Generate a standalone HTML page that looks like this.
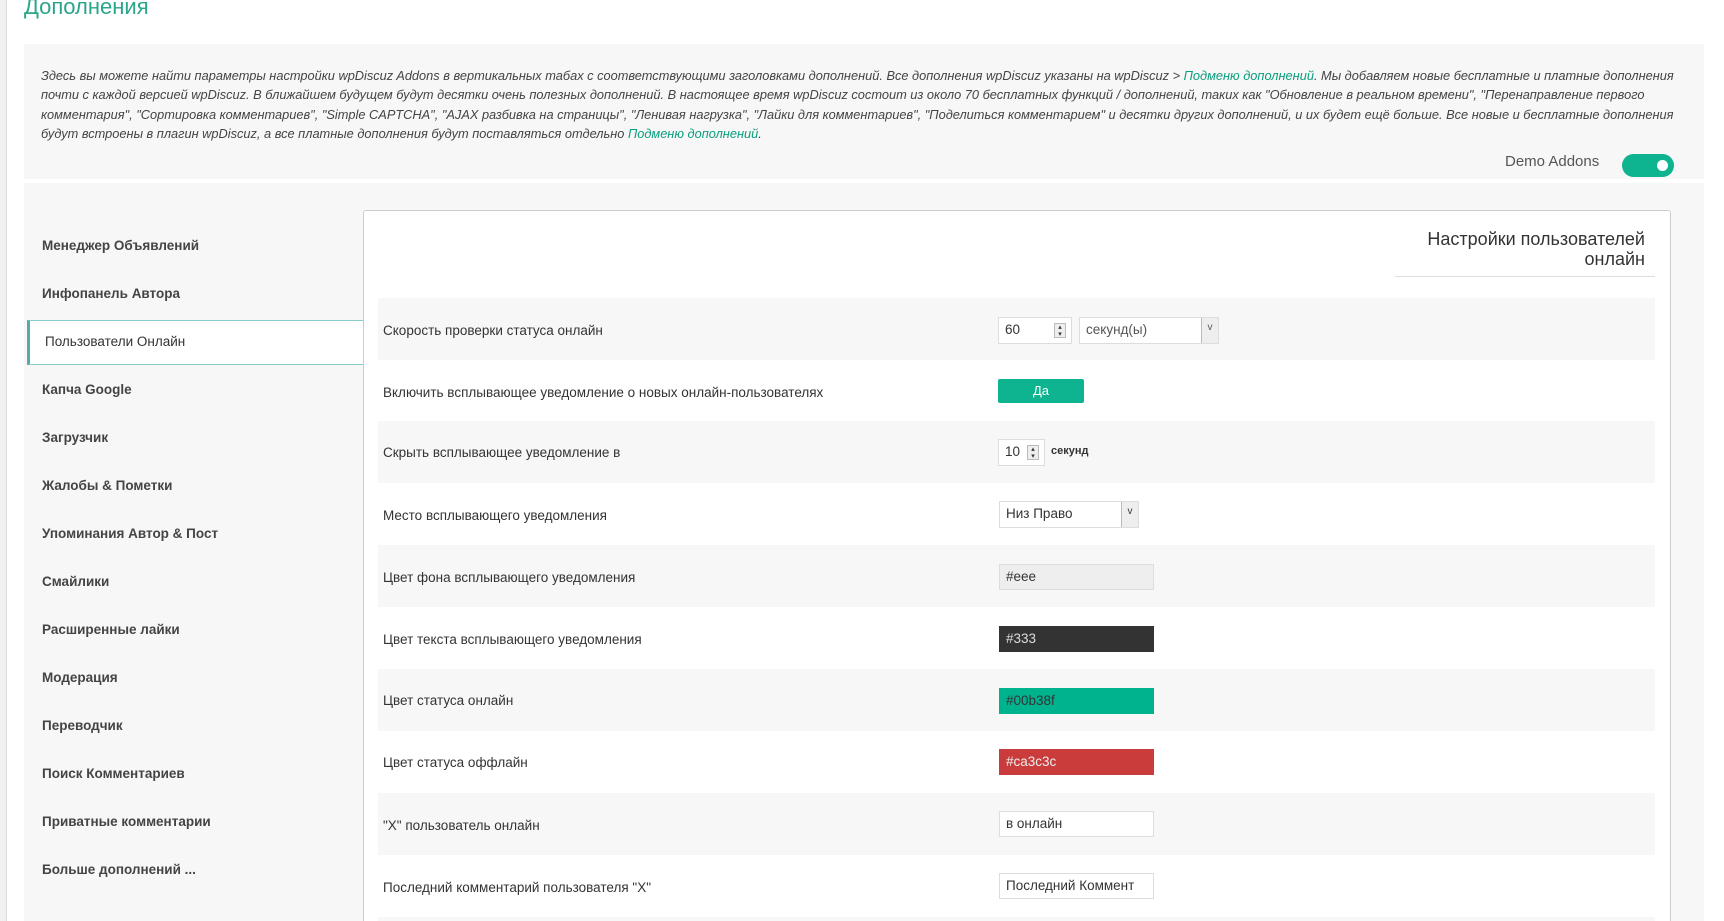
<!DOCTYPE html>
<html style="overflow:hidden;width:1724px;height:921px"><head><meta charset="utf-8"><style>
*{box-sizing:border-box;margin:0;padding:0}
body{width:1724px;height:921px;overflow:hidden;background:#fff;font-family:"Liberation Sans","DejaVu Sans",sans-serif;color:#333;position:relative}
.a{position:absolute}
.lb{left:0;top:0;width:7px;height:921px;border-right:1px solid #ddd;background:#f1f1f1}
h1{position:absolute;left:24px;top:-6px;font-size:22px;font-weight:normal;color:#2aa58a}
.desc{left:24px;top:44px;width:1680px;height:137px;background:#f7f7f7;border-bottom:2px solid #fff}
.desc p{position:absolute;left:17px;top:22px;width:1650px;font-style:italic;font-size:12.8px;line-height:19.3px;color:#444}
.desc a{color:#0a9e7e;text-decoration:none}
.body{left:24px;top:183px;width:1680px;height:738px;background:#f7f7f7}
.demo{left:1505px;top:153px;font-size:15px;color:#555}
.tog{left:1622px;top:154px;width:52px;height:23px;border-radius:12px;background:#0eb38f}
.tog i{position:absolute;right:6px;top:6px;width:11px;height:11px;border-radius:50%;background:#fff}
.side{left:42px;font-size:13.5px;font-weight:bold;color:#444}
.act{left:27px;top:320px;width:337px;height:45px;background:#fff;border:1px solid #8cc;border-left:3px solid #5aa;border-right:none}
.panel{left:363px;top:210px;width:1308px;height:720px;background:#fff;border:1px solid #ccc;border-radius:3px;overflow:hidden}
.hd{right:79px;top:229px;text-align:right;font-size:18px;line-height:20px;color:#333}
.hl{left:1395px;top:276px;width:260px;height:1px;background:#ddd}
.row{left:378px;width:1277px;height:62px}
.g{background:#f7f7f7}
.lbl{left:383px;font-size:13.5px;color:#333}
.inp{position:absolute;height:26px;border:1px solid #ddd;background:#fff;font-size:13.5px;padding:4px 6px;color:#333}
</style></head><body>
<div class="a lb"></div>
<h1>Дополнения</h1>
<div class="a desc"><p>Здесь вы можете найти параметры настройки wpDiscuz Addons в вертикальных табах с соответствующими заголовками дополнений. Все дополнения wpDiscuz указаны на wpDiscuz &gt; <a>Подменю дополнений</a>. Мы добавляем новые бесплатные и платные дополнения почти с каждой версией wpDiscuz. В ближайшем будущем будут десятки очень полезных дополнений. В настоящее время wpDiscuz состоит из около 70 бесплатных функций / дополнений, таких как "Обновление в реальном времени", "Перенаправление первого комментария", "Сортировка комментариев", "Simple CAPTCHA", "AJAX разбивка на страницы", "Ленивая нагрузка", "Лайки для комментариев", "Поделиться комментарием" и десятки других дополнений, и их будет ещё больше. Все новые и бесплатные дополнения будут встроены в плагин wpDiscuz, а все платные дополнения будут поставляться отдельно <a>Подменю дополнений</a>.</p></div>
<div class="a demo">Demo Addons</div>
<div class="a tog"><i></i></div>
<div class="a body"></div>
<div class="a act"></div>
<div class="a side" style="top:238px">Менеджер Объявлений</div>
<div class="a side" style="top:286px">Инфопанель Автора</div>
<div class="a side" style="top:334px;left:45px;font-weight:normal;color:#333">Пользователи Онлайн</div>
<div class="a side" style="top:382px">Капча Google</div>
<div class="a side" style="top:430px">Загрузчик</div>
<div class="a side" style="top:478px">Жалобы &amp; Пометки</div>
<div class="a side" style="top:526px">Упоминания Автор &amp; Пост</div>
<div class="a side" style="top:574px">Смайлики</div>
<div class="a side" style="top:622px">Расширенные лайки</div>
<div class="a side" style="top:670px">Модерация</div>
<div class="a side" style="top:718px">Переводчик</div>
<div class="a side" style="top:766px">Поиск Комментариев</div>
<div class="a side" style="top:814px">Приватные комментарии</div>
<div class="a side" style="top:862px">Больше дополнений ...</div>
<div class="a panel"></div>
<div class="a hd">Настройки пользователей<br>онлайн</div>
<div class="a hl"></div>
<div class="a row g" style="top:298px"></div>
<div class="a row g" style="top:421px"></div>
<div class="a row g" style="top:545px"></div>
<div class="a row g" style="top:669px"></div>
<div class="a row g" style="top:793px"></div>
<div class="a row g" style="top:917px;height:4px"></div>
<div class="a lbl" style="top:323px">Скорость проверки статуса онлайн</div>
<div class="a lbl" style="top:385px">Включить всплывающее уведомление о новых онлайн-пользователях</div>
<div class="a lbl" style="top:445px">Скрыть всплывающее уведомление в</div>
<div class="a lbl" style="top:508px">Место всплывающего уведомления</div>
<div class="a lbl" style="top:570px">Цвет фона всплывающего уведомления</div>
<div class="a lbl" style="top:632px">Цвет текста всплывающего уведомления</div>
<div class="a lbl" style="top:693px">Цвет статуса онлайн</div>
<div class="a lbl" style="top:755px">Цвет статуса оффлайн</div>
<div class="a lbl" style="top:818px">"X" пользователь онлайн</div>
<div class="a lbl" style="top:880px">Последний комментарий пользователя "X"</div>
<div class="inp" style="left:998px;top:317px;width:74px;height:27px">60<span style="position:absolute;right:5px;top:5px;width:12px;height:15px;border:1px solid #bbb;background:#eee;font-size:7px;line-height:7px;text-align:center">▴<br>▾</span></div>
<div class="inp" style="left:1079px;top:317px;width:140px;height:27px;color:#555">секунд(ы)<span style="position:absolute;right:0;top:0;width:17px;height:25px;border-left:1px solid #bbb;background:#eee;font-size:10px;text-align:center;padding-top:4px">v</span></div>
<div class="a" style="left:998px;top:379px;width:86px;height:24px;background:#0eb38f;border-radius:2px;color:#fff;font-size:13px;text-align:center;line-height:24px">Да</div>
<div class="inp" style="left:998px;top:439px;width:47px;height:27px">10<span style="position:absolute;right:5px;top:5px;width:12px;height:15px;border:1px solid #bbb;background:#eee;font-size:7px;line-height:7px;text-align:center">▴<br>▾</span></div>
<div class="a" style="left:1051px;top:445px;font-size:11px;font-weight:bold">секунд</div>
<div class="inp" style="left:999px;top:501px;width:140px;height:27px">Низ Право<span style="position:absolute;right:0;top:0;width:17px;height:25px;border-left:1px solid #bbb;background:#eee;font-size:10px;text-align:center;padding-top:4px">v</span></div>
<div class="inp" style="left:999px;top:564px;width:155px;background:#eee">#eee</div>
<div class="inp" style="left:999px;top:626px;width:155px;background:#333;border-color:#333;color:#ddd">#333</div>
<div class="inp" style="left:999px;top:688px;width:155px;background:#00b38f;border-color:#00b38f;color:#333">#00b38f</div>
<div class="inp" style="left:999px;top:749px;width:155px;background:#ca3c3c;border-color:#ca3c3c;color:#eee">#ca3c3c</div>
<div class="inp" style="left:999px;top:811px;width:155px">в онлайн</div>
<div class="inp" style="left:999px;top:873px;width:155px">Последний Коммент</div>
</body></html>
